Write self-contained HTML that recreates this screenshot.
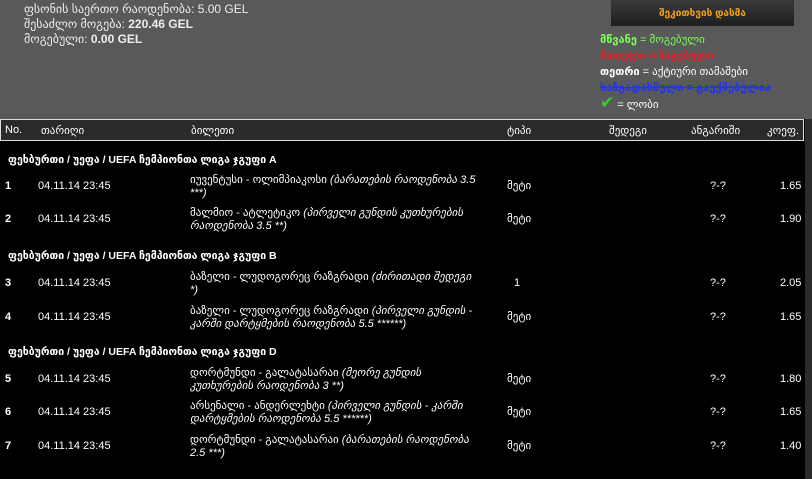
<!DOCTYPE html>
<html><head><meta charset="utf-8"><style>
*{margin:0;padding:0;box-sizing:border-box}
body{width:812px;height:479px;background:#000;font-family:"Liberation Sans","DejaVu Sans",sans-serif;color:#fff;position:relative;overflow:hidden;font-size:11px}
.top{position:absolute;left:0;top:0;width:812px;height:119px;background:#595959}
.info{position:absolute;left:24px;top:2px;font-size:12px;line-height:15px;color:#eee}
.btn{position:absolute;left:611px;top:0;width:183px;height:26px;background:linear-gradient(#3a3a3a,#1e1e1e);color:#f0a020;font-size:10px;text-align:center;line-height:28px;font-weight:bold}
.leg{position:absolute;left:600px;top:32px;font-size:11px;line-height:16px;font-weight:bold}
.hdr{position:absolute;left:0;top:119px;width:804px;height:22px;border:1px solid #ddd;background:#2a2a2a;font-size:11px}
.hdr span,.r span{position:absolute;top:4px}
.strip{position:absolute;left:805px;top:119px;width:7px;height:360px;background:#2b2b2b}
.g{position:absolute;left:8px;font-weight:bold;font-size:10.5px}
.r{position:absolute;left:0;width:804px;height:30px;font-size:11px}
.r span{top:0;line-height:13px}
.t{width:290px}
</style></head><body>
<div class="top"></div>
<div class="info">ფსონის საერთო რაოდენობა: 5.00 GEL<br>შესაძლო მოგება: <b>220.46 GEL</b><br>მოგებული: <b>0.00 GEL</b></div>
<div class="btn">შეკითხვის დასმა</div>
<div class="leg"><span style="color:#7dff5a">მწვანე</span> <span style="color:#7dff5a;font-weight:normal">= მოგებული</span><br>
<span style="color:#e0202a">წითელი = წაგებული</span><br>
<span>თეთრი</span> <span style="font-weight:normal">= აქტიური თამაშები</span><br>
<span style="color:#2030ff;text-decoration:line-through">ხაზგადასმული = გაუქმებულია</span><br>
<span style="color:#3c3;font-size:17px;line-height:14px">✔</span> <span style="font-weight:normal">= ლობი</span></div>
<div class="hdr"><span style="left:4px">No.</span><span style="left:40px">თარიღი</span><span style="left:190px">ბილეთი</span><span style="left:506px">ტიპი</span><span style="left:608px">შედეგი</span><span style="left:690px">ანგარიში</span><span style="left:766px">კოეფ.</span></div>
<div class="strip"></div>

<div class="g" style="top:154px">ფეხბურთი / უეფა / UEFA ჩემპიონთა ლიგა ჯგუფი A</div>
<div class="r" style="top:174px"><span style="left:5px;top:6px;font-weight:bold">1</span><span style="left:38px;top:6px">04.11.14 23:45</span><span class="t" style="left:190px">იუვენტუსი - ოლიმპიაკოსი <i>(ბარათების რაოდენობა 3.5 ***)</i></span><span style="left:507px;top:6px">მეტი</span><span style="left:710px;top:6px">?-?</span><span style="left:780px;top:6px">1.65</span></div>
<div class="r" style="top:207px"><span style="left:5px;top:6px;font-weight:bold">2</span><span style="left:38px;top:6px">04.11.14 23:45</span><span class="t" style="left:190px">მალმიო - ატლეტიკო <i>(პირველი გუნდის კუთხურების რაოდენობა 3.5 **)</i></span><span style="left:507px;top:6px">მეტი</span><span style="left:710px;top:6px">?-?</span><span style="left:780px;top:6px">1.90</span></div>
<div class="g" style="top:250px">ფეხბურთი / უეფა / UEFA ჩემპიონთა ლიგა ჯგუფი B</div>
<div class="r" style="top:271px"><span style="left:5px;top:6px;font-weight:bold">3</span><span style="left:38px;top:6px">04.11.14 23:45</span><span class="t" style="left:190px">ბაზელი - ლუდოგორეც რაზგრადი <i>(ძირითადი შედეგი *)</i></span><span style="left:514px;top:6px">1</span><span style="left:710px;top:6px">?-?</span><span style="left:780px;top:6px">2.05</span></div>
<div class="r" style="top:305px"><span style="left:5px;top:6px;font-weight:bold">4</span><span style="left:38px;top:6px">04.11.14 23:45</span><span class="t" style="left:190px">ბაზელი - ლუდოგორეც რაზგრადი <i>(პირველი გუნდის - კარში დარტყმების რაოდენობა 5.5 ******)</i></span><span style="left:507px;top:6px">მეტი</span><span style="left:710px;top:6px">?-?</span><span style="left:780px;top:6px">1.65</span></div>
<div class="g" style="top:346px">ფეხბურთი / უეფა / UEFA ჩემპიონთა ლიგა ჯგუფი D</div>
<div class="r" style="top:367px"><span style="left:5px;top:6px;font-weight:bold">5</span><span style="left:38px;top:6px">04.11.14 23:45</span><span class="t" style="left:190px">დორტმუნდი - გალატასარაი <i>(მეორე გუნდის კუთხურების რაოდენობა 3 **)</i></span><span style="left:507px;top:6px">მეტი</span><span style="left:710px;top:6px">?-?</span><span style="left:780px;top:6px">1.80</span></div>
<div class="r" style="top:400px"><span style="left:5px;top:6px;font-weight:bold">6</span><span style="left:38px;top:6px">04.11.14 23:45</span><span class="t" style="left:190px">არსენალი - ანდერლეხტი <i>(პირველი გუნდის - კარში დარტყმების რაოდენობა 5.5 ******)</i></span><span style="left:507px;top:6px">მეტი</span><span style="left:710px;top:6px">?-?</span><span style="left:780px;top:6px">1.65</span></div>
<div class="r" style="top:434px"><span style="left:5px;top:6px;font-weight:bold">7</span><span style="left:38px;top:6px">04.11.14 23:45</span><span class="t" style="left:190px">დორტმუნდი - გალატასარაი <i>(ბარათების რაოდენობა 2.5 ***)</i></span><span style="left:507px;top:6px">მეტი</span><span style="left:710px;top:6px">?-?</span><span style="left:780px;top:6px">1.40</span></div>
</body></html>
